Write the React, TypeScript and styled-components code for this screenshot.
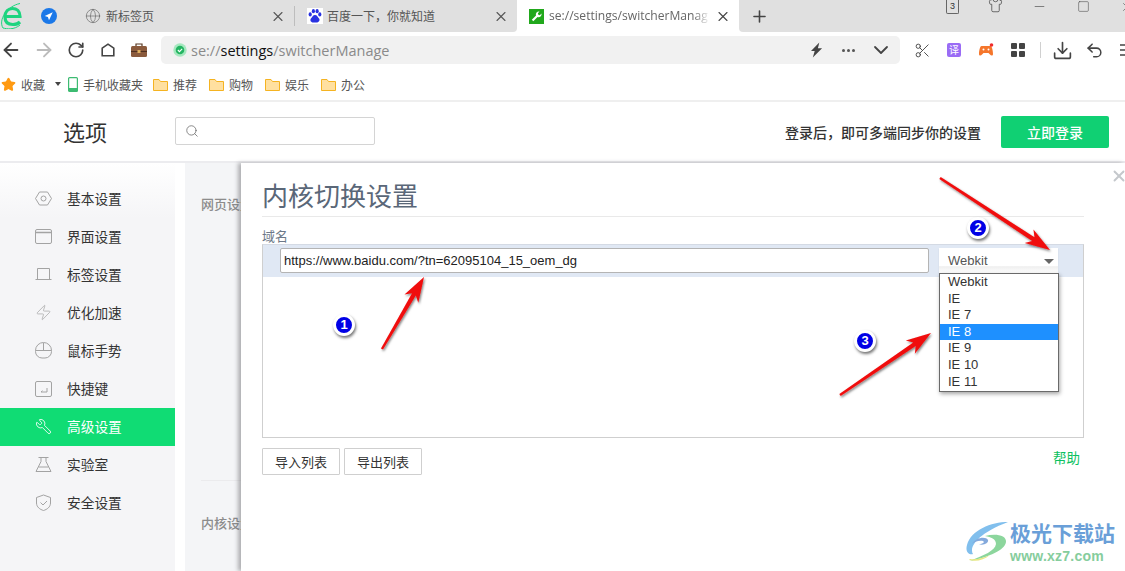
import React from "react";
import styled, { createGlobalStyle } from "styled-components";
import { ArrowLeft, ArrowRight, RotateCw, Scissors, ChevronDown, Download, Undo2, Search, Plus, X, Wrench, Zap, Star, Globe, Minus, Square, Shirt } from "lucide-react";

const cjk = `"Noto Sans CJK SC", "Noto Sans", sans-serif`;
const arial = `"Liberation Sans", "Noto Sans CJK SC", sans-serif`;

const Global = createGlobalStyle`
  html, body { margin: 0; padding: 0; background: #fff; }
  * { box-sizing: border-box; }
  #root { width: 1125px; height: 571px; }
`;

const Page = styled.div`
  position: relative; width: 1125px; height: 571px; overflow: hidden;
  display: flex; flex-direction: column; font-family: ${cjk}; background: #fff;
`;

/* Tab strip */
const TabStrip = styled.div`display: flex; height: 32px; flex: none; background: #fff;`;
const TabGroup = styled.div`
  height: 32px; width: 517px; flex: none; background: #e0e0e0; display: flex; align-items: center;
  border-bottom-right-radius: 4px;
`;
const LogoSlot = styled.div`width: 76px; height: 32px; flex: none; display: flex; align-items: center; position: relative;`;
const Tab = styled.div<{ $w: number }>`
  width: ${p => p.$w}px; height: 32px; flex: none; display: flex; align-items: center; gap: 5px;
  padding-left: 9px; position: relative; font-size: 12px; color: #555;
`;
const BaiduTab = styled(Tab)`padding-left: 12px; gap: 4px;`;
const TabTitle = styled.span`flex: 1; white-space: nowrap; overflow: hidden; min-width: 0; margin-top: -1px;`;
const FadedTitle = styled(TabTitle)`
  mask-image: linear-gradient(to right, #000 90%, transparent 100%);
`;
const TabClose = styled.span`width: 16px; margin-right: 8px; display: flex; justify-content: center; color: #555; flex: none;`;
const TabDivider = styled.div`width: 1px; height: 20px; background: #bdbdbd; flex: none;`;
const ActiveTab = styled(Tab)`
  background: #fff; border-radius: 5px 5px 0 0; font-size: 12.1px; color: #666; font-family: "Open Sans", sans-serif; padding-left: 12px;
`;
const StripRest = styled.div`
  flex: 1; background: #e0e0e0; height: 32px; border-bottom-left-radius: 4px; display: flex; align-items: flex-start; color: #444; min-width: 0; overflow: hidden;
`;
const PlusSlot = styled.div`width: 207px; height: 32px; padding-left: 11px; display: flex; align-items: center; flex: none;`;
const WinSlot = styled.div<{ $w: number }>`width: ${p => p.$w}px; height: 13px; display: flex; align-items: center; flex: none;`;
const CountBox = styled.span`
  width: 13px; height: 14px; border: 1px solid #666; border-top: 0; border-radius: 0 0 2px 2px; font: 9px ${arial}; color: #333;
  display: flex; align-items: center; justify-content: center;
`;

/* Toolbar */
const Toolbar = styled.div`height: 36px; flex: none; display: flex; align-items: center; background: #fff; overflow: hidden;`;
const NavSlot = styled.div<{ $w: number; $c?: string }>`
  width: ${p => p.$w}px; flex: none; display: flex; justify-content: center; align-items: center; color: ${p => p.$c || "#444"};
`;
const AddressBar = styled.div`
  width: 739px; height: 28px; flex: none; background: #f1f1f1; border-radius: 5px; margin-left: 13px;
  display: flex; align-items: center; padding-left: 12px; font: 14.5px "Open Sans", sans-serif; color: #8a8a8a;
`;
const Strong = styled.span`color: #111;`;
const Url = styled.span`margin-left: 4px; flex: 1; white-space: nowrap;`;
const Dots = styled.span`width: 13px; height: 3px; display: flex; gap: 2px; margin: 0 14px 0 19px;`;
const Dot = styled.i`width: 3px; height: 3px; border-radius: 50%; background: #555; display: block;`;
const ToolDivider = styled.div`width: 1px; height: 16px; background: #d0d0d0; flex: none; margin-left: 12px;`;
const TransBadge = styled.span`
  width: 14px; height: 14px; background: #9a6cf5; color: #fff; font-size: 10px; border-radius: 2px; line-height: 14px; text-align: center;
`;

/* Bookmarks */
const Bookmarks = styled.div`
  height: 34px; flex: none; border-bottom: 2px solid #efefef; display: flex; align-items: center; padding-left: 1px; font-size: 12px; color: #555;
`;
const Mark = styled.div<{ $ml?: number }>`display: flex; align-items: center; gap: 5px; margin-left: ${p => p.$ml ?? 0}px; white-space: nowrap;`;
const Caret = styled.span`
  width: 0; height: 0; border: 3px solid transparent; border-top: 4px solid #444; border-bottom: 0; margin-left: 10px;
`;

/* Header */
const Header = styled.div`
  height: 61px; flex: none; border-bottom: 2px solid #ececef; display: flex; align-items: center; position: relative;
`;
const PageTitle = styled.div`width: 175px; padding-left: 63px; font-size: 22px; color: #333; flex: none; margin-top: -1px;`;
const SearchBox = styled.div`
  width: 200px; height: 28px; border: 1px solid #d4d4d4; border-radius: 2px; display: flex; align-items: center; padding-left: 9px; color: #666; margin-top: -1px;
`;
const LoginArea = styled.div`margin-left: auto; padding-right: 16px; display: flex; align-items: center; gap: 20px;`;
const LoginHint = styled.span`font-size: 14px; color: #333; font-weight: 500;`;
const LoginButton = styled.button`
  width: 108px; height: 32px; background: #10d073; color: #fff; border: 0; border-radius: 2px; font: 500 14px ${cjk}; margin: 0; padding: 0;
`;

/* Main */
const Main = styled.div`flex: 1; display: flex; min-height: 0;`;
const Sidebar = styled.div`
  width: 175px; flex: none; background: linear-gradient(#fff 0, #f5f5f7 55px); padding-top: 17px;
`;
const NavItem = styled.div<{ $active?: boolean }>`
  height: 38px; display: flex; align-items: center; padding: 0 0 2px 35px; gap: 15px; font-size: 13.7px;
  color: ${p => (p.$active ? "#fff" : "#333")}; background: ${p => (p.$active ? "#10dc74" : "transparent")};
  svg { color: ${p => (p.$active ? "#fff" : "#a3a3a3")}; flex: none; }
`;
const Behind = styled.div`
  width: 56px; margin-left: 10px; flex: none; background: #f4f5f7; padding: 31px 0 0 16px; overflow: hidden; white-space: nowrap; display: flex; flex-direction: column;
  font-size: 13px; color: #8c8c8c; font-weight: 500;
`;
const BehindLine = styled.div`height: 1px; background: #ebebed; margin-top: 267px; margin-bottom: 32px; width: 100%;`;

const Panel = styled.div`
  flex: 1; background: #fff; padding: 16px 41px 0 21px; position: relative; box-shadow: -3px 0 4px rgba(90,90,95,.45); min-width: 0;
`;
const PanelTitle = styled.div`
  font-size: 26px; line-height: 32px; color: #5a6778; height: 38px; border-bottom: 1px solid #e9e9e9; white-space: nowrap;
`;
const FieldLabel = styled.div`font-size: 13px; line-height: 16px; color: #6c7888; margin-top: 11px; height: 16px;`;
const TableBox = styled.div`height: 194px; border: 1px solid #cfcfcf; border-top-color: #d4dae4;`;
const TableHead = styled.div`
  height: 32px; background: #e0e8f4; padding: 3px 25px 0 17px; display: flex; align-items: flex-start; gap: 10px; position: relative;
`;
const UrlInput = styled.input`
  flex: 1; min-width: 0; height: 25px; border: 1px solid #b4b4b4; border-radius: 2px; background: #fff; padding: 0 3px;
  font: 13px ${arial}; color: #222; outline: 0; margin: 0;
`;
const SelectWrap = styled.div`width: 119px; flex: none; position: relative;`;
const SelectBox = styled.div`
  height: 25px; background: linear-gradient(#fff 0, #fff 70%, #efefef 75%, #fff 100%); padding: 5px 0 0 9px; font: 13px ${arial}; color: #555;
  box-shadow: 0 1px 1px rgba(0,0,0,.12); position: relative;
`;
const SelectCaret = styled.span`
  position: absolute; right: 4px; top: 11px; width: 0; height: 0; border: 5px solid transparent; border-top: 5px solid #666; border-bottom: 0;
`;
const Dropdown = styled.div`
  position: absolute; left: 0; top: 25px; width: 120px; height: 119px; background: #fff; border: 1px solid #6a6a6a; z-index: 3;
  box-shadow: 1px 2px 4px rgba(0,0,0,.35);
`;
const Option = styled.div<{ $on?: boolean }>`
  height: 16.6px; padding-left: 8px; font: 13px/15.5px ${arial}; color: ${p => (p.$on ? "#fff" : "#333")}; background: ${p => (p.$on ? "#1e90ff" : "transparent")};
`;
const ActionRow = styled.div`display: flex; gap: 4px; margin-top: 10px; align-items: center; position: relative;`;
const ActionButton = styled.button`
  width: 78px; height: 27px; border: 1px solid #cfcfcf; background: #fff; border-radius: 1px; color: #333; font: 13px ${cjk}; padding: 0; margin: 0;
`;
const HelpLink = styled.span`margin-left: auto; margin-right: 4px; margin-top: -10px; color: #0cc160; font-size: 13.5px;`;
const PanelClose = styled.span`position: absolute; right: -3px; top: 4px; color: #c4c8cc; display: flex;`;

/* Things drawn over the page */
const Overlay = styled.svg`position: absolute; left: 0; top: 0; pointer-events: none; z-index: 5;`;
const Badge = styled.span<{ $x: number; $y: number }>`
  position: absolute; left: ${p => p.$x - 11}px; top: ${p => p.$y - 11}px; width: 22px; height: 22px; border-radius: 50%;
  background: #0000e6; border: 3px solid #fff; box-shadow: 1px 2px 3px rgba(0,0,0,.55); color: #fff; z-index: 6;
  font: 700 13px/16px ${arial}; text-align: center;
`;
const Watermark = styled.div`
  position: absolute; left: 966px; top: 520px; width: 152px; height: 42px; z-index: 6; display: flex; gap: 2px; background: rgba(255,255,255,.35);
`;
const WaterLogo = styled.svg`flex: none; opacity: .85;`;
const WaterText = styled.div`display: flex; flex-direction: column; padding-top: 1px;`;
const WaterCn = styled.span`font-size: 21px; line-height: 22px; font-weight: 700; color: #6a9fd8; white-space: nowrap;`;
const WaterEn = styled.span`font: 700 14px/14px ${arial}; color: #86cd9d; letter-spacing: .25px; margin-top: 6px;`;

const Folder = () => (
  <svg width="15" height="13" viewBox="0 0 15 13">
    <path d="M.5 1.500h5.500l1.500 2h7v9H.5z" fill="#ffe0a0" stroke="#f5b321" />
  </svg>
);
const Phone = () => (
  <svg width="10" height="15" viewBox="0 0 10 15">
    <rect x=".6" y=".6" width="8.800" height="13.800" rx="1" fill="#fff" stroke="#3dbb72" strokeWidth="1.200" />
    <rect x=".6" y="11" width="8.800" height="3.400" fill="#3dbb72" />
  </svg>
);
const Logo = () => (
  <svg width="23" height="26" viewBox="0 0 23 26">
    <path d="M5 13.500h15c0-5.500-3.500-8-7.500-8S5 8.500 5 14s3.500 7.500 8 7.500c3 0 5.500-1 7-2.500" fill="none" stroke="#1ed47f" strokeWidth="3.200" />
    <path d="M3 25C-2 17 7 3 20 .5M20 22c-6 5-13 4-17 3" fill="none" stroke="#1ed47f" strokeWidth="1" />
  </svg>
);
const NavPin = () => (
  <svg width="16" height="16" viewBox="0 0 15 15" style={{ position: "absolute", left: 41, top: 8 }}>
    <circle cx="7.500" cy="7.500" r="7.500" fill="#1b78e8" />
    <path d="M11 4 3.500 7.500l3 1 1 3z" fill="#fff" />
  </svg>
);
const BaiduIcon = () => (
  <svg width="16" height="16" viewBox="0 0 15 15">
    <rect width="15" height="15" fill="#fff" />
    <g fill="#2932e1">
      <ellipse cx="3" cy="6" rx="1.500" ry="2" />
      <ellipse cx="6" cy="3" rx="1.500" ry="2" />
      <ellipse cx="9.500" cy="3" rx="1.500" ry="2" />
      <ellipse cx="12" cy="6" rx="1.500" ry="2" />
      <path d="M7.500 6.500c2 0 2.500 2 4 3.500 1 2-1 3.500-2.500 3.500H6C4 13.500 2.500 12 3.500 10c1.500-1.500 2-3.500 4-3.500z" />
    </g>
  </svg>
);
const WrenchTile = () => (
  <svg width="15" height="15" viewBox="0 0 15 15">
    <rect width="15" height="15" fill="#21a81c" />
    <path d="M10.500 2.500a3 3 0 0 0-3.500 4L2.800 10.700l1.500 1.500L8.500 8a3 3 0 0 0 4-3.500l-1.700 1.700-1.500-.4-.4-1.500z" fill="#fff" />
  </svg>
);
const SecureDot = () => (
  <svg width="14" height="14" viewBox="0 0 13 13" style={{ flex: "none" }}>
    <circle cx="6.500" cy="6.500" r="6.200" fill="#a5e8bf" />
    <circle cx="6.500" cy="6.500" r="4" fill="#24b562" />
    <path d="m4.500 6.500 1.500 1.500 2.500-2.500" fill="none" stroke="#fff" />
  </svg>
);
const House = () => (
  <svg width="14" height="14" viewBox="0 0 14 14">
    <path d="M1.200 12.800V5.200L7 1.200l5.800 4v7.600z" fill="none" stroke="#444" strokeWidth="1.600" />
  </svg>
);
const Briefcase = () => (
  <svg width="16" height="16" viewBox="0 0 16 16">
    <path d="M5 4V2h6v2" fill="none" stroke="#5a3a24" strokeWidth="1.200" />
    <rect y="4" width="16" height="11" rx="1.500" fill="#8a5a3c" />
    <rect y="9" width="16" height="1" fill="#4e3020" />
    <rect x="6.500" y="8" width="3" height="3" fill="#e0b060" />
  </svg>
);
const Bolt = () => (
  <svg width="12" height="16" viewBox="0 0 13 16" style={{ flex: "none" }}><path d="M9 0 0 9h4l-2 7 10-10H7.500z" fill="#444" /></svg>
);
const GameIcon = () => (
  <svg width="16" height="15" viewBox="0 0 16 15">
    <path d="M3.500 3h9c1.500 0 2.500 5 2.500 8 0 2-2 2-3 .5L10.500 10h-5L4 11.500C3 13 1 13 1 11c0-3 1-8 2.500-8z" fill="#f5762b" />
    <circle cx="13.500" cy="2" r="1.800" fill="#f02c2c" />
    <circle cx="5.500" cy="6.500" r="1" fill="#fff" /><circle cx="10.500" cy="6.500" r="1" fill="#fff" />
  </svg>
);
const GridIcon = () => (
  <svg width="14" height="14" viewBox="0 0 14 14" fill="#444">
    <rect width="6" height="6" rx="1" /><rect x="8" width="6" height="6" rx="1" />
    <rect y="8" width="6" height="6" rx="1" /><rect x="8" y="8" width="6" height="6" rx="1" />
  </svg>
);
const Bars = () => (
  <svg width="12" height="12" viewBox="0 0 12 12" stroke="#444" strokeWidth="1.500"><path d="M0 1h12M0 6h12M0 11h12" /></svg>
);

const s = { width: 17, height: 17, viewBox: "0 0 17 17", fill: "none", stroke: "currentColor", strokeWidth: 1 } as const;
const HexIcon = () => <svg {...s}><path d="M4.500 2h8l4 6.500-4 6.500h-8L.5 8.500z" /><circle cx="8.500" cy="8.500" r="2.500" /></svg>;
const WindowIcon = () => <svg {...s}><rect x=".5" y="1.500" width="16" height="14" rx="1.500" /><path d="M.5 4.500h16" strokeWidth="1.500" /></svg>;
const LaptopIcon = () => <svg {...s}><path d="M2.500 13V2.500h12V13M.5 13.500h16" /></svg>;
const MouseIcon = () => <svg {...s}><path d="M.5 8.500a8 8 0 0 1 16 0v1a6.500 6.500 0 0 1-6.500 6.500H7A6.500 6.500 0 0 1 .5 9.500zM.5 8.500h16M8.500 1v7.500" /></svg>;
const KeyIcon = () => <svg {...s}><rect x=".5" y="1.500" width="16" height="15" rx="1.500" /><path d="M12 8v4H6M6 12l1.500-1.300" /></svg>;
const FlaskIcon = () => <svg {...s}><path d="M3.500 1.500h10M6 1.500v4L1 15.500h15l-5-10v-4M3.500 11h10" /></svg>;
const ShieldIcon = () => <svg {...s}><path d="M8.500 1 15.500 3.500V9c0 4-3.500 6.500-7 7.500-3.500-1-7-3.500-7-7.500V3.500z" /><path d="m5.500 8.500 2.500 2.500 4-4" /></svg>;
const FlippedWrench = styled(Wrench)`transform: scaleX(-1);`;

const navItems = [
  { label: "基本设置", icon: <HexIcon /> },
  { label: "界面设置", icon: <WindowIcon /> },
  { label: "标签设置", icon: <LaptopIcon /> },
  { label: "优化加速", icon: <Zap size={17} strokeWidth={1} /> },
  { label: "鼠标手势", icon: <MouseIcon /> },
  { label: "快捷键", icon: <KeyIcon /> },
  { label: "高级设置", icon: <FlippedWrench size={17} strokeWidth={1.2} />, active: true },
  { label: "实验室", icon: <FlaskIcon /> },
  { label: "安全设置", icon: <ShieldIcon /> },
];
const options = ["Webkit", "IE", "IE 7", "IE 8", "IE 9", "IE 10", "IE 11"];
const marks = ["推荐", "购物", "娱乐", "办公"];

const Arrow = ({ x1, y1, x2, y2 }: { x1: number; y1: number; x2: number; y2: number }) => {
  const a = Math.atan2(y2 - y1, x2 - x1);
  const pt = (x: number, y: number, d: number, o: number) => `${x - d * Math.cos(a) - o * Math.sin(a)},${y - d * Math.sin(a) + o * Math.cos(a)}`;
  return (
    <g filter="url(#arrowShadow)">
      <polygon
        points={[
          pt(x1, y1, 0, -1.2), pt(x2, y2, 20, -2.2), pt(x2, y2, 25, -8), `${x2},${y2}`,
          pt(x2, y2, 25, 8), pt(x2, y2, 20, 2.2), pt(x1, y1, 0, 1.2),
        ].join(" ")}
        fill="#f00c0c"
      />
    </g>
  );
};

export default function App() {
  return (
    <Page>
      <Global />
      <TabStrip>
        <TabGroup>
          <LogoSlot><Logo /><NavPin /></LogoSlot>
          <Tab $w={218}>
            <Globe size={16} strokeWidth={1} color="#666" />
            <TabTitle>新标签页</TabTitle>
            <TabClose><X size={17} strokeWidth={1.6} /></TabClose>
          </Tab>
          <TabDivider />
          <BaiduTab $w={222}>
            <BaiduIcon />
            <TabTitle>百度一下，你就知道</TabTitle>
            <TabClose><X size={17} strokeWidth={1.6} /></TabClose>
          </BaiduTab>
        </TabGroup>
        <ActiveTab $w={222}>
          <WrenchTile />
          <FadedTitle>se://settings/switcherManag</FadedTitle>
          <TabClose><X size={17} strokeWidth={1.6} color="#444" /></TabClose>
        </ActiveTab>
        <StripRest>
          <PlusSlot><Plus size={19} strokeWidth={2} /></PlusSlot>
          <WinSlot $w={42}><CountBox>3</CountBox></WinSlot>
          <WinSlot $w={44}><Shirt size={15} strokeWidth={1.2} style={{ marginTop: -2 }} /></WinSlot>
          <WinSlot $w={45}><Minus size={15} strokeWidth={1} /></WinSlot>
          <WinSlot $w={43}><Square size={13} strokeWidth={1} /></WinSlot>
          <WinSlot $w={14}><X size={14} strokeWidth={1} /></WinSlot>
        </StripRest>
      </TabStrip>

      <Toolbar>
        <NavSlot $w={22}><ArrowLeft size={22} strokeWidth={2} /></NavSlot>
        <NavSlot $w={44} $c="#bbb"><ArrowRight size={22} strokeWidth={2} /></NavSlot>
        <NavSlot $w={20}><RotateCw size={18} strokeWidth={2.2} /></NavSlot>
        <NavSlot $w={44}><House /></NavSlot>
        <NavSlot $w={18}><Briefcase /></NavSlot>
        <AddressBar>
          <SecureDot />
          <Url>se://<Strong>settings</Strong>/switcherManage</Url>
          <Bolt />
          <Dots><Dot /><Dot /><Dot /></Dots>
          <ChevronDown size={24} strokeWidth={1.8} color="#444" style={{ marginRight: 7 }} />
        </AddressBar>
        <NavSlot $w={44}><Scissors size={17} strokeWidth={1.3} /></NavSlot>
        <NavSlot $w={20}><TransBadge>译</TransBadge></NavSlot>
        <NavSlot $w={44}><GameIcon /></NavSlot>
        <NavSlot $w={20}><GridIcon /></NavSlot>
        <ToolDivider />
        <NavSlot $w={43}><Download size={21} strokeWidth={1.9} /></NavSlot>
        <NavSlot $w={20}><Undo2 size={19} strokeWidth={1.9} /></NavSlot>
        <NavSlot $w={44}><Bars /></NavSlot>
      </Toolbar>

      <Bookmarks>
        <Mark><Star size={15} fill="#ff9a12" color="#ff9a12" />收藏</Mark>
        <Caret />
        <Mark $ml={7}><Phone />手机收藏夹</Mark>
        {marks.map((m, i) => (
          <Mark key={m} $ml={i === 0 ? 10 : 12}><Folder />{m}</Mark>
        ))}
      </Bookmarks>

      <Header>
        <PageTitle>选项</PageTitle>
        <SearchBox><Search size={14} strokeWidth={1.3} /></SearchBox>
        <LoginArea>
          <LoginHint>登录后，即可多端同步你的设置</LoginHint>
          <LoginButton>立即登录</LoginButton>
        </LoginArea>
      </Header>

      <Main>
        <Sidebar>
          {navItems.map(n => (
            <NavItem key={n.label} $active={n.active}>{n.icon}{n.label}</NavItem>
          ))}
        </Sidebar>
        <Behind>
          网页设置
          <BehindLine />
          内核设置
        </Behind>
        <Panel>
          <PanelTitle>内核切换设置</PanelTitle>
          <FieldLabel>域名</FieldLabel>
          <TableBox>
            <TableHead>
              <UrlInput readOnly value="https://www.baidu.com/?tn=62095104_15_oem_dg" />
              <SelectWrap>
                <SelectBox>Webkit<SelectCaret /></SelectBox>
                <Dropdown>
                  {options.map(o => <Option key={o} $on={o === "IE 8"}>{o}</Option>)}
                </Dropdown>
              </SelectWrap>
            </TableHead>
          </TableBox>
          <ActionRow>
            <ActionButton>导入列表</ActionButton>
            <ActionButton>导出列表</ActionButton>
            <HelpLink>帮助</HelpLink>
          </ActionRow>
          <PanelClose><X size={18} strokeWidth={2.5} /></PanelClose>
        </Panel>
      </Main>

      <Overlay width="1125" height="571" viewBox="0 0 1125 571">
        <defs>
          <filter id="arrowShadow" x="-20%" y="-20%" width="140%" height="140%">
            <feDropShadow dx="1" dy="1.500" stdDeviation="1.200" floodColor="#000" floodOpacity=".5" />
          </filter>
        </defs>
        <Arrow x1={382} y1={349} x2={424} y2={277} />
        <Arrow x1={940} y1={178} x2={1050} y2={250} />
        <Arrow x1={840} y1={395} x2={931} y2={333} />
      </Overlay>
      <Badge $x={344} $y={325}>1</Badge>
      <Badge $x={978} $y={228}>2</Badge>
      <Badge $x={865} $y={341}>3</Badge>

      <Watermark>
        <WaterLogo width="42" height="42" viewBox="0 0 42 42">
          <path d="M42 2C25 2 5 10 1 25c-2 7 2 10 6 9C3 28 10 14 42 2z" fill="#6cb4ea" />
          <path d="M6 24c4-7 14-8 16-4 1 3-5 6-9 4 4 0 6-2 4-3-4-1-9 1-11 3z" fill="#6f9bd6" />
          <path d="M19 16c10-3 22-1 21 6-1 8-17 15-36 19 14-6 25-10 26-17 0-5-5-7-11-8z" fill="#79cf8c" />
          <path d="M4 39c6 1 14-1 20-4-6 5-14 7-21 5z" fill="#e4e26a" />
        </WaterLogo>
        <WaterText>
          <WaterCn>极光下载站</WaterCn>
          <WaterEn>www.xz7.com</WaterEn>
        </WaterText>
      </Watermark>
    </Page>
  );
}
